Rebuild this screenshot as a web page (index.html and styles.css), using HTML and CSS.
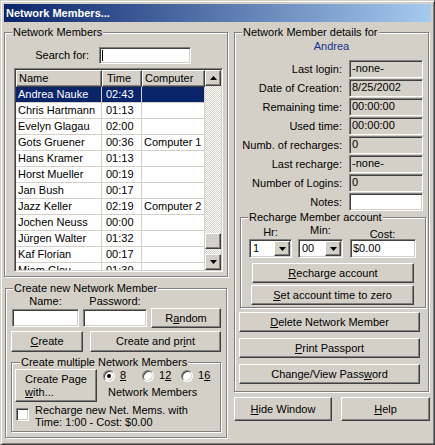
FILE: index.html
```html
<!DOCTYPE html>
<html>
<head>
<meta charset="utf-8">
<title>Network Members...</title>
<link rel="stylesheet" href="styles.css">
</head>
<body>
<div class="window">
  <div class="titlebar">Network Members...</div>
  <div class="client">
    <div class="col-left">
      <fieldset class="gb gb-members">
        <legend>Network Members</legend>
        <div class="search-row">
          <span class="search-label">Search for:</span>
          <div class="edit search"><span class="caret"></span></div>
        </div>
        <div class="listview">
          <div class="lv-main">
            <div class="lv-head">
              <div class="hd c-name">Name</div>
              <div class="hd c-time">Time</div>
              <div class="hd c-comp">Computer</div>
            </div>
            <div class="lv-rows">
              <div class="row sel"><span class="c-name">Andrea Nauke</span><span class="c-time">02:43</span><span class="c-comp"></span></div>
              <div class="row"><span class="c-name">Chris Hartmann</span><span class="c-time">01:13</span><span class="c-comp"></span></div>
              <div class="row"><span class="c-name">Evelyn Glagau</span><span class="c-time">02:00</span><span class="c-comp"></span></div>
              <div class="row"><span class="c-name">Gots Gruener</span><span class="c-time">00:36</span><span class="c-comp">Computer 1</span></div>
              <div class="row"><span class="c-name">Hans Kramer</span><span class="c-time">01:13</span><span class="c-comp"></span></div>
              <div class="row"><span class="c-name">Horst Mueller</span><span class="c-time">00:19</span><span class="c-comp"></span></div>
              <div class="row"><span class="c-name">Jan Bush</span><span class="c-time">00:17</span><span class="c-comp"></span></div>
              <div class="row"><span class="c-name">Jazz Keller</span><span class="c-time">02:19</span><span class="c-comp">Computer 2</span></div>
              <div class="row"><span class="c-name">Jochen Neuss</span><span class="c-time">00:00</span><span class="c-comp"></span></div>
              <div class="row"><span class="c-name">Jürgen Walter</span><span class="c-time">01:32</span><span class="c-comp"></span></div>
              <div class="row"><span class="c-name">Kaf Florian</span><span class="c-time">00:17</span><span class="c-comp"></span></div>
              <div class="row"><span class="c-name">Miam Glou</span><span class="c-time">01:30</span><span class="c-comp"></span></div>
            </div>
          </div>
          <div class="vscroll">
            <div class="sbtn"><svg width="7" height="4" viewBox="0 0 7 4"><path d="M3.5 0L7 4H0z" fill="#000"/></svg></div>
            <div class="track"><div class="thumb"></div></div>
            <div class="sbtn"><svg width="7" height="4" viewBox="0 0 7 4"><path d="M0 0h7L3.5 4z" fill="#000"/></svg></div>
          </div>
        </div>
      </fieldset>

      <fieldset class="gb gb-create">
        <legend>Create new Network Member</legend>
        <div class="create-grid">
          <span class="lbl">Name:</span>
          <span class="lbl">Password:</span>
          <span></span>
          <div class="edit name-in"></div>
          <div class="edit pass-in"></div>
          <button class="btn btn-random">R<u>a</u>ndom</button>
        </div>
        <div class="create-row">
          <button class="btn btn-create"><u>C</u>reate</button>
          <button class="btn btn-cprint">Create and pr<u>i</u>nt</button>
        </div>
        <fieldset class="gb gb-multi">
          <legend>Create multiple Network Members</legend>
          <div class="multi-top">
            <button class="btn btn-page"><span class="page-text">Create Page<br><u>w</u>ith...</span></button>
            <div class="multi-opts">
              <div class="radios">
                <span class="radio-item"><span class="radio on"></span><span><u>8</u></span></span>
                <span class="radio-item"><span class="radio"></span><span>1<u>2</u></span></span>
                <span class="radio-item"><span class="radio"></span><span>1<u>6</u></span></span>
              </div>
              <div class="nm">Network Members</div>
            </div>
          </div>
          <div class="chk-row">
            <span class="checkbox"></span>
            <span class="chk-text">Recharge new Net. Mems. with<br>Time: 1:00 - Cost: $0.00</span>
          </div>
        </fieldset>
      </fieldset>
    </div>

    <div class="col-right">
      <fieldset class="gb gb-details">
        <legend>Network Member details for</legend>
        <div class="who">Andrea</div>
        <div class="fields">
          <span class="flbl">Last login:</span><div class="edit ro">-none-</div>
          <span class="flbl">Date of Creation:</span><div class="edit ro">8/25/2002</div>
          <span class="flbl">Remaining time:</span><div class="edit ro">00:00:00</div>
          <span class="flbl">Used time:</span><div class="edit ro">00:00:00</div>
          <span class="flbl">Numb. of recharges:</span><div class="edit ro">0</div>
          <span class="flbl">Last recharge:</span><div class="edit ro">-none-</div>
          <span class="flbl">Number of Logins:</span><div class="edit ro">0</div>
          <span class="flbl">Notes:</span><div class="edit"></div>
        </div>
        <fieldset class="gb gb-recharge">
          <legend>Recharge Member account</legend>
          <div class="rc-grid">
            <span class="rl rl-hr">Hr:</span>
            <span class="rl rl-min">Min:</span>
            <span class="rl rl-cost">Cost:</span>
            <div class="edit combo c-hr"><span class="combo-val">1</span><span class="drop"><svg width="7" height="4" viewBox="0 0 7 4"><path d="M0 0h7L3.5 4z" fill="#000"/></svg></span></div>
            <div class="edit combo c-min"><span class="combo-val">00</span><span class="drop"><svg width="7" height="4" viewBox="0 0 7 4"><path d="M0 0h7L3.5 4z" fill="#000"/></svg></span></div>
            <div class="edit cost">$0.00</div>
          </div>
          <button class="btn btn-recharge"><u>R</u>echarge account</button>
          <button class="btn btn-zero"><u>S</u>et account time to zero</button>
        </fieldset>
        <button class="btn btn-wide btn-first"><u>D</u>elete Network Member</button>
        <button class="btn btn-wide"><u>P</u>rint Passport</button>
        <button class="btn btn-wide">Change/View Pass<u>w</u>ord</button>
      </fieldset>
      <div class="bottom-btns">
        <button class="btn btn-hide"><u>H</u>ide Window</button>
        <button class="btn btn-help"><u>H</u>elp</button>
      </div>
    </div>
  </div>
</div>
</body>
</html>
```

FILE: styles.css
```css
* { box-sizing: border-box; }
html, body { margin: 0; padding: 0; background: #d4d0c8; }
body { font: 11px/13px "Liberation Sans", Arial, sans-serif; color: #000; }
u { text-decoration: underline; text-underline-offset: 1px; }

.window {
  width: 435px; height: 445px;
  border: 1px solid; border-color: #d4d0c8 #404040 #404040 #d4d0c8;
  box-shadow: inset 1px 1px #fff, inset -1px -1px #808080;
  padding: 3px;
  display: flex; flex-direction: column;
  background: #d4d0c8;
}
.titlebar {
  height: 18px; flex: none;
  background: linear-gradient(90deg, #0a246a, #a6caf0);
  color: #fff; font-weight: bold; line-height: 18px; padding-left: 2px;
}
.client { flex: 1; display: flex; }
.col-left { width: 225px; flex: none; display: flex; flex-direction: column; align-items: flex-start; }
.col-right { width: 202px; flex: none; display: flex; flex-direction: column; align-items: flex-start; }

/* group boxes */
.gb {
  margin: 0; padding: 0; min-width: 0;
  border: 1px solid #808080;
  box-shadow: inset 1px 1px #fff, 1px 1px #fff;
}
.gb > legend { padding: 0 1px; margin-left: 7px; background: #d4d0c8; line-height: 13px; }

/* controls */
.edit {
  border: 1px solid; border-color: #808080 #fff #fff #808080;
  box-shadow: inset 1px 1px #404040, inset -1px -1px #d4d0c8;
  background: #fff;
}
.edit.ro { background: #d4d0c8; }
.btn {
  font: inherit; color: #000; background: #d4d0c8;
  border: 1px solid; border-color: #fff #404040 #404040 #fff;
  box-shadow: inset -1px -1px #808080;
  margin: 0; padding: 0; text-align: center; line-height: 13px;
  display: flex; align-items: center; justify-content: center;
}

/* Network Members group */
.gb-members { margin-top: 4px; width: 224px; padding-bottom: 4px; }
.search-row { display: flex; align-items: center; margin-top: 8px; gap: 10px; }
.search-label { width: 84px; text-align: right; }
.search { width: 92px; height: 17px; padding: 2px 0 0 2px; }
.caret { display: block; width: 1px; height: 11px; background: #000; }

.listview {
  margin: 4px 0 0 9px; width: 209px; height: 204px;
  border: 1px solid; border-color: #808080 #fff #fff #808080;
  box-shadow: inset 1px 1px #404040, inset -1px -1px #d4d0c8;
  padding: 1px;
  display: flex; background: #fff;
}
.lv-main { width: 189px; overflow: hidden; }
.lv-head { display: flex; height: 17px; }
.hd {
  height: 17px; line-height: 14px;
  border: 1px solid; border-color: #fff #404040 #404040 #fff;
  box-shadow: inset -1px -1px #808080; background: #d4d0c8;
}
.c-name { width: 86px; padding-left: 2px; }
.c-time { width: 40px; padding-left: 4px; }
.c-comp { width: 63px; padding-left: 2px; }
.row { display: flex; height: 16px; line-height: 15px; border-bottom: 1px solid #d4d0c8; white-space: nowrap; }
.row > span { border-right: 1px solid #d4d0c8; overflow: hidden; }
.row.sel { background: #0a246a; color: #fff; }

.vscroll { width: 16px; display: flex; flex-direction: column; }
.sbtn {
  width: 16px; height: 16px; flex: none;
  border: 1px solid; border-color: #fff #404040 #404040 #fff;
  box-shadow: inset -1px -1px #808080; background: #d4d0c8;
  display: flex; align-items: center; justify-content: center;
}
.sbtn svg { display: block; }
.track {
  flex: 1;
  background-image: repeating-conic-gradient(#fff 0 25%, #d4d0c8 0 50%);
  background-size: 2px 2px;
}
.thumb {
  margin-top: 147px; width: 16px; height: 16px;
  border: 1px solid; border-color: #fff #404040 #404040 #fff;
  box-shadow: inset -1px -1px #808080; background: #d4d0c8;
}

/* Create new member */
.gb-create { margin: 5px 0 0 1px; width: 222px; padding-bottom: 5px; }
.create-grid {
  display: grid; grid-template-columns: 67px 64px 70px; column-gap: 4px;
  grid-template-rows: 13px 20px; align-items: center; margin-left: 6px;
}
.lbl { text-align: center; }
.name-in, .pass-in { height: 18px; }
.btn-random { height: 20px; }
.create-row { display: flex; gap: 7px; margin: 3px 0 0 5px; }
.btn-create { width: 72px; height: 21px; }
.btn-cprint { width: 131px; height: 21px; }

.gb-multi { margin: 4px 0 0 5px; width: 210px; padding-bottom: 3px; }
.gb-multi > legend { margin-left: 8px; }
.multi-top { display: flex; }
.btn-page { width: 84px; height: 33px; margin-left: 3px; }
.page-text { text-align: left; display: block; }
.multi-opts { margin-left: 6px; }
.radios { display: flex; height: 13px; align-items: center; }
.radio-item { width: 39px; display: flex; align-items: center; gap: 5px; }
.radio {
  width: 12px; height: 12px; border-radius: 50%; background: #fff; flex: none;
  border: 1px solid; border-color: #808080 #fff #fff #808080;
  box-shadow: inset 1px 1px #404040, inset -1px -1px #d4d0c8;
  display: flex; align-items: center; justify-content: center;
}
.radio.on::after { content: ""; width: 4px; height: 4px; border-radius: 50%; background: #000; }
.nm { margin: 4px 0 0 5px; }
.chk-row { display: flex; align-items: flex-start; margin: 2px 0 0 4px; gap: 6px; }
.checkbox {
  width: 13px; height: 13px; margin-top: 4px; flex: none; background: #fff;
  border: 1px solid; border-color: #808080 #fff #fff #808080;
  box-shadow: inset 1px 1px #404040, inset -1px -1px #d4d0c8;
}
.chk-text { line-height: 12px; }

/* details */
.gb-details { margin: 4px 0 0 5px; width: 195px; padding-bottom: 7px; }
.who { margin-top: 1px; text-align: center; color: #14328c; }
.fields {
  display: grid; grid-template-columns: 107px 74px; column-gap: 7px;
  grid-auto-rows: 18px; row-gap: 1px; margin-top: 7px; align-items: center;
}
.flbl { text-align: right; white-space: nowrap; }
.fields .edit { height: 18px; line-height: 15px; padding-left: 2px; }

.gb-recharge { margin: 0 0 0 5px; width: 186px; padding-bottom: 2px; }
.rc-grid {
  display: grid; grid-template-columns: 43px 45px 67px; column-gap: 6px;
  grid-template-rows: 15px 19px; margin-left: 8px;
}
.rc-grid .cost { margin-left: 1px; }
.rl { text-align: center; }
.rl-hr { padding-top: 2px; }
.rl-min { padding-top: 0; }
.rl-cost { padding-top: 4px; }
.combo { height: 19px; display: flex; align-items: stretch; padding: 1px; }
.combo-val { flex: 1; padding-left: 2px; line-height: 15px; }
.drop {
  width: 16px; flex: none;
  border: 1px solid; border-color: #fff #404040 #404040 #fff;
  box-shadow: inset -1px -1px #808080; background: #d4d0c8;
  display: flex; align-items: center; justify-content: center;
}
.drop svg { display: block; }
.cost { height: 19px; padding-left: 2px; line-height: 16px; }
.btn-recharge { width: 162px; height: 20px; margin: 5px 0 0 11px; }
.btn-zero { width: 163px; height: 20px; margin: 2px 0 0 10px; }

.btn-wide { width: 181px; height: 20px; margin: 6px 0 0 4px; }
.btn-wide.btn-first { margin-top: 4px; }

.bottom-btns { display: flex; gap: 9px; margin: 5px 0 0 5px; }
.btn-hide { width: 98px; height: 24px; }
.btn-help { width: 89px; height: 24px; }
```
